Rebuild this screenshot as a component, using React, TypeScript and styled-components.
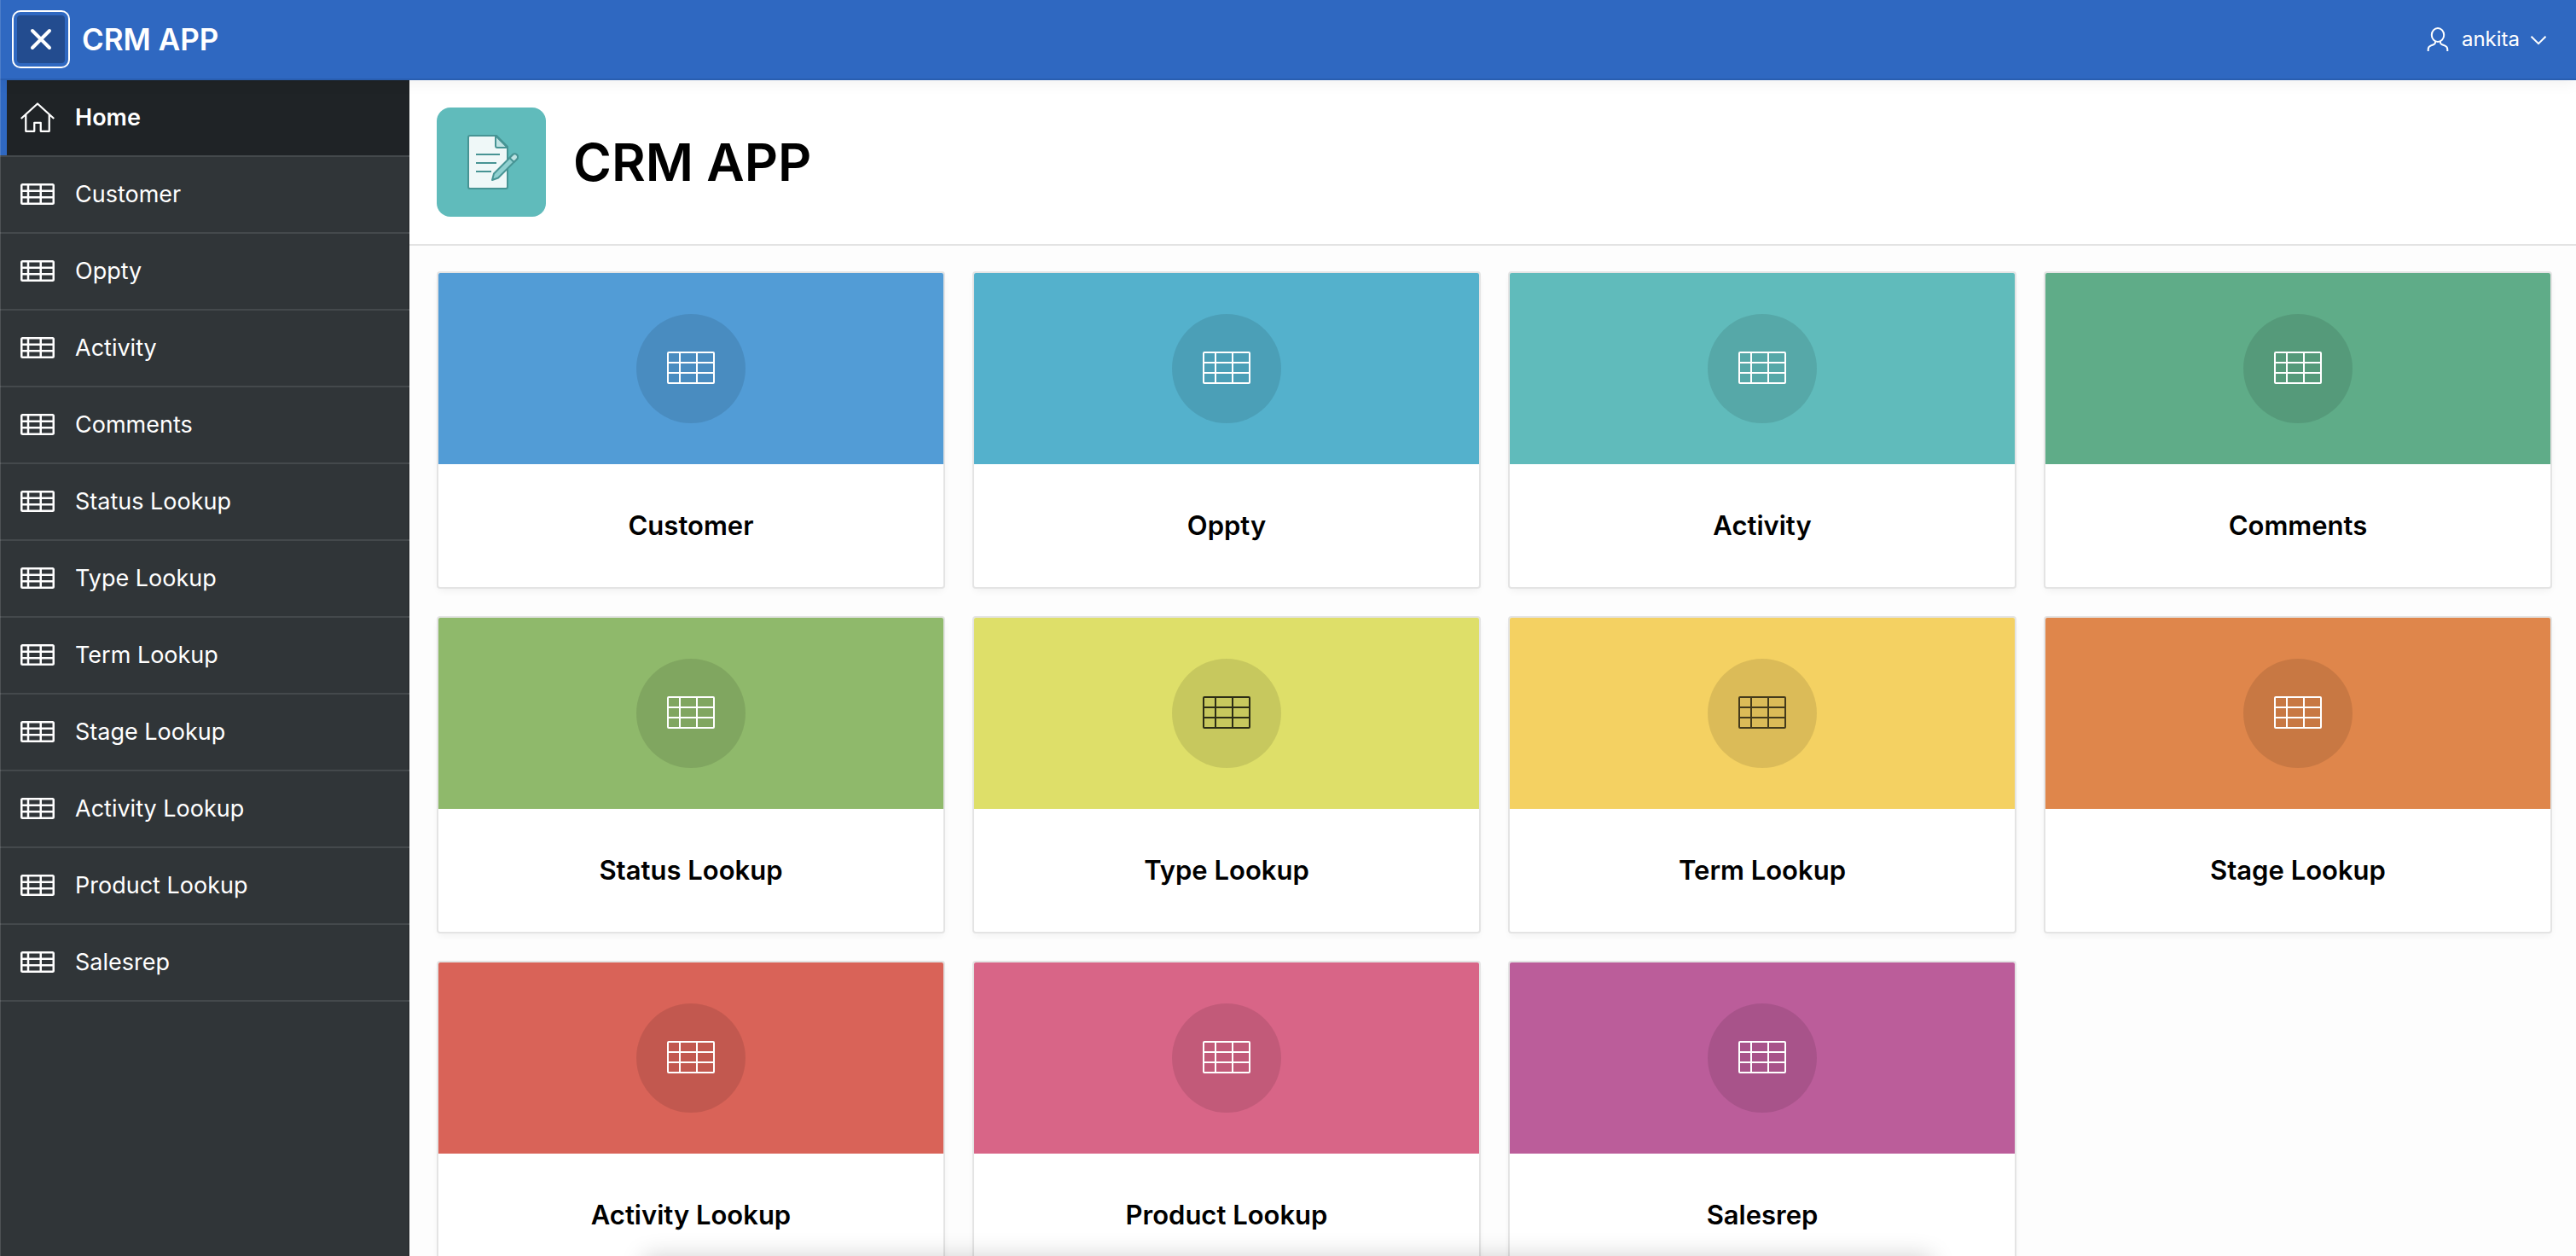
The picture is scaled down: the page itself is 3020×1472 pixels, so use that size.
import React from "react";
import styled, { createGlobalStyle } from "styled-components";

const GlobalStyle = createGlobalStyle`
  *, *::before, *::after { box-sizing: border-box; }
  body {
    margin: 0;
    background: #fdfdfd;
    color: #000;
    font-family: Inter, "Liberation Sans", sans-serif;
    font-size: 27px;
    line-height: 40px;
    overflow: hidden;
  }
`;

const Shell = styled.div`
  display: flex;
  flex-direction: column;
  height: 100vh;
  overflow: hidden;
`;

const Header = styled.header`
  position: relative;
  z-index: 2;
  display: flex;
  align-items: center;
  flex: none;
  gap: 14px;
  padding: 12px 34px 12px 14px;
  border-bottom: 2px solid #295eb0;
  background: #2f68c1;
  color: #fff;
  box-shadow: 0 4px 16px rgba(0, 0, 0, 0.06);
`;

const NavToggle = styled.button`
  display: grid;
  place-items: center;
  width: 68px;
  height: 68px;
  padding: 4px;
  border: 2px solid #fff;
  border-radius: 10px;
  background: #234c8f content-box;
  color: #fff;
  cursor: pointer;
`;

const Brand = styled.a`
  flex: 1;
  color: inherit;
  font-size: 35px;
  font-weight: 600;
  text-decoration: none;
`;

const UserButton = styled.button`
  display: flex;
  align-items: center;
  gap: 12px;
  padding: 0;
  border: 0;
  background: none;
  color: #fff;
  font: inherit;
  font-size: 24px;
  cursor: pointer;
`;

const Body = styled.div`
  display: flex;
  flex: 1;
  min-height: 0;
`;

const Sidebar = styled.nav`
  flex: none;
  width: 480px;
  background: #303538;
  box-shadow: inset -2px 0 0 #2b2f32;
`;

const NavList = styled.ul`
  margin: 0;
  padding: 0;
  list-style: none;
`;

const NavLink = styled.a<{ $current?: boolean }>`
  display: flex;
  align-items: center;
  gap: 24px;
  height: 90px;
  padding: 0 24px;
  border-bottom: 2px solid #44494c;
  background: ${(p) => (p.$current ? "#1f2326" : "transparent")};
  box-shadow: ${(p) => (p.$current ? "inset 8px 0 0 #2f68c1" : "none")};
  color: #fff;
  font-weight: ${(p) => (p.$current ? 600 : 400)};
  text-decoration: none;
`;

const Main = styled.main`
  flex: 1;
  min-width: 0;
  overflow: hidden;
`;

const Hero = styled.section`
  display: flex;
  align-items: center;
  gap: 32px;
  padding: 32px;
  border-bottom: 2px solid #e3e3e3;
  background: #fff;
`;

const HeroIcon = styled.div`
  display: grid;
  place-items: center;
  width: 128px;
  height: 128px;
  border-radius: 16px;
  background: #60bbbb;
`;

const HeroTitle = styled.h1`
  margin: 0;
  font-size: 61px;
  font-weight: 600;
  line-height: 80px;
`;

const CardGrid = styled.ul`
  display: grid;
  grid-template-columns: repeat(4, minmax(0, 1fr));
  gap: 32px;
  margin: 0;
  padding: 30px 28px 30px 32px;
  list-style: none;
`;

const Card = styled.a`
  display: block;
  overflow: hidden;
  border: 2px solid #e4e4e4;
  border-radius: 4px;
  background: #fff;
  box-shadow: 0 4px 8px -2px rgba(0, 0, 0, 0.06);
  color: #000;
  text-decoration: none;
`;

const CardBanner = styled.div<{ $color: string; $ink: string }>`
  display: grid;
  place-items: center;
  padding: 48px;
  background: ${(p) => p.$color};
  color: ${(p) => p.$ink};
`;

const IconDisc = styled.div`
  display: grid;
  place-items: center;
  width: 128px;
  height: 128px;
  border-radius: 50%;
  background: rgba(0, 0, 0, 0.1);
`;

const CardTitle = styled.h2`
  margin: 0;
  padding: 52px 32px;
  font-size: 31px;
  font-weight: 600;
  line-height: 40px;
  text-align: center;
`;

const BottomShade = styled.div`
  position: fixed;
  z-index: 3;
  bottom: -40px;
  left: 25%;
  width: 50%;
  height: 40px;
  box-shadow: 0 0 28px rgba(0, 0, 0, 0.18);
  pointer-events: none;
`;

const WindowEdge = styled.div`
  position: fixed;
  z-index: 3;
  top: 0;
  bottom: 0;
  left: 0;
  width: 1px;
  background: rgba(255, 255, 255, 0.14);
  pointer-events: none;
`;

const CloseIcon = () => (
  <svg width="32" height="32" viewBox="0 0 32 32" fill="none" stroke="currentColor" strokeWidth="4" strokeLinecap="round" aria-hidden="true">
    <path d="M6 6 26 26M26 6 6 26" />
  </svg>
);

const UserIcon = () => (
  <svg width="32" height="32" viewBox="0 0 32 32" fill="none" stroke="currentColor" strokeWidth="2" aria-hidden="true">
    <ellipse cx="16" cy="11" rx="7.2" ry="8" />
    <path d="M13 18.500v1.500c0 1-1 1.800-2 2.200l-3.500 1.400C5.500 24.500 4.700 26 4.700 28v2M19 18.500v1.500c0 1 1 1.800 2 2.200l3.500 1.400C26.500 24.500 27.300 26 27.300 28v2" />
  </svg>
);

const ChevronIcon = () => (
  <svg width="20" height="20" viewBox="0 0 20 20" fill="none" stroke="currentColor" strokeWidth="2" aria-hidden="true">
    <path d="m1.500 6.700 8.500 8.500L18.500 6.700" />
  </svg>
);

const HomeIcon = () => (
  <svg width="40" height="40" viewBox="0 0 16 16" fill="none" stroke="currentColor" strokeWidth="0.900" strokeLinejoin="round" aria-hidden="true">
    <path d="M.3 8.400 8 1.400l7.700 7M2.500 6.600v7.700h4v-4h3v4h4V6.600" />
  </svg>
);

const TableIcon = () => (
  <svg width="40" height="40" viewBox="0 0 16 16" fill="none" stroke="currentColor" strokeWidth="1" aria-hidden="true">
    <rect x="0.500" y="3.300" width="15" height="9" rx="0.500" />
    <path d="M.5 6.300h15M.5 9.300h15M3.600 3.300v9M9.500 3.300v9" />
  </svg>
);

const LargeTableIcon = () => (
  <svg width="64" height="64" viewBox="0 0 64 64" fill="none" stroke="currentColor" strokeWidth="2" aria-hidden="true">
    <rect x="5" y="13" width="54" height="36" rx="1" />
    <path d="M5 25h54M5 37h54M19 13v36M39 13v36" />
  </svg>
);

const DocumentIcon = () => (
  <svg width="64" height="64" viewBox="0 0 64 64" stroke="#479494" strokeWidth="2" strokeLinejoin="round" aria-hidden="true">
    <path d="M7 1h31l13 13v47a2 2 0 0 1-2 2H7a2 2 0 0 1-2-2V3a2 2 0 0 1 2-2Z" fill="#eff8f8" />
    <path d="M37 1v12a2 2 0 0 0 2 2h12Z" fill="#bfe3e3" />
    <path d="M14 23h28M14 33h24M14 43h18" fill="none" />
    <path d="m33 53 2-7.500 22-22a3.500 3.500 0 0 1 5 5l-22 22Z" fill="#90d0d0" />
    <path d="m53.500 27 5 5 3.500-3.500a3.500 3.500 0 0 0-5-5Z" fill="#bfe3e3" />
  </svg>
);

const WHITE = "#ffffff";

const pages = [
  { name: "Customer", color: "#529cd6", ink: WHITE },
  { name: "Oppty", color: "#54b1cc", ink: WHITE },
  { name: "Activity", color: "#60bbbb", ink: WHITE },
  { name: "Comments", color: "#5fac88", ink: WHITE },
  { name: "Status Lookup", color: "#8fb96b", ink: WHITE },
  { name: "Type Lookup", color: "#dedf69", ink: "#2c2d15" },
  { name: "Term Lookup", color: "#f4d162", ink: "#443a1b" },
  { name: "Stage Lookup", color: "#df864b", ink: WHITE },
  { name: "Activity Lookup", color: "#d96358", ink: WHITE },
  { name: "Product Lookup", color: "#d86587", ink: WHITE },
  { name: "Salesrep", color: "#bb5d9a", ink: WHITE },
];

export default function App() {
  return (
    <Shell>
      <GlobalStyle />
      <Header>
        <NavToggle type="button" aria-label="Close navigation" aria-expanded="true">
          <CloseIcon />
        </NavToggle>
        <Brand href="#home">CRM APP</Brand>
        <UserButton type="button" aria-haspopup="menu">
          <UserIcon />
          ankita
          <ChevronIcon />
        </UserButton>
      </Header>
      <Body>
        <Sidebar aria-label="Main">
          <NavList>
            <li>
              <NavLink href="#home" $current aria-current="page">
                <HomeIcon />
                Home
              </NavLink>
            </li>
            {pages.map((page) => (
              <li key={page.name}>
                <NavLink href="#page">
                  <TableIcon />
                  {page.name}
                </NavLink>
              </li>
            ))}
          </NavList>
        </Sidebar>
        <Main>
          <Hero>
            <HeroIcon>
              <DocumentIcon />
            </HeroIcon>
            <HeroTitle>CRM APP</HeroTitle>
          </Hero>
          <CardGrid>
            {pages.map((page) => (
              <li key={page.name}>
                <Card href="#page">
                  <CardBanner $color={page.color} $ink={page.ink}>
                    <IconDisc>
                      <LargeTableIcon />
                    </IconDisc>
                  </CardBanner>
                  <CardTitle>{page.name}</CardTitle>
                </Card>
              </li>
            ))}
          </CardGrid>
        </Main>
      </Body>
      <BottomShade />
      <WindowEdge />
    </Shell>
  );
}
